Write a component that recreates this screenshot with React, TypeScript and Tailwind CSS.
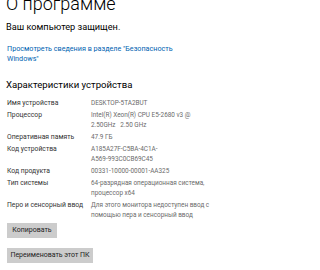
const ROWS: { label: string; value: string[] }[] = [
  { label: 'Имя устройства', value: ['DESKTOP-5TA2BUT'] },
  { label: 'Процессор', value: ['Intel(R) Xeon(R) CPU E5-2680 v3 @', '2.50GHz   2.50 GHz'] },
  { label: 'Оперативная память', value: ['47.9 ГБ'] },
  { label: 'Код устройства', value: ['A185A27F-C5BA-4C1A-', 'A569-993C0CB69C45'] },
  { label: 'Код продукта', value: ['00331-10000-00001-AA325'] },
  { label: 'Тип системы', value: ['64-разрядная операционная система,', 'процессор x64'] },
  {
    label: 'Перо и сенсорный ввод',
    value: ['Для этого монитора недоступен ввод с', 'помощью пера и сенсорный ввод'],
  },
]

export default function App() {
  return (
    <div
      className="w-[320px] h-[270px] overflow-hidden bg-white pl-[6px] text-black"
      style={{ fontFamily: 'Roboto, "Noto Sans", sans-serif' }}
    >
      <h1 className="mt-[-6px] text-[18px] leading-[20px] font-light">О программе</h1>
      <p className="mt-[7px] text-[9.2px] leading-[12px]">Ваш компьютер защищен.</p>
      <a className="mt-[11px] block whitespace-pre pl-[1px] text-[7.2px] leading-[9.5px] text-[#0063b1]">
        {'Просмотреть сведения в разделе "Безопасность\nWindows"'}
      </a>

      <h2 className="mt-[15px] text-[9.6px] leading-[14px]">Характеристики устройства</h2>

      <div className="mt-[6px] grid grid-cols-[84px_1fr] gap-y-[2px] pl-[1px] text-[6.8px] leading-[10px]">
        {ROWS.map(row => (
          <div key={row.label} className="contents">
            <div className="whitespace-nowrap text-[#333]">{row.label}</div>
            <div className="whitespace-pre text-[6.4px] text-[#6b6b6b]">{row.value.join('\n')}</div>
          </div>
        ))}
      </div>

      <div className="mt-[3px] flex flex-col items-start gap-[10px] pl-[1px]">
        <button className="h-[15px] w-[50px] bg-[#cccccc] text-[7px] text-[#222]">Копировать</button>
        <button className="h-[15px] w-[86px] bg-[#cccccc] text-[7px] text-[#222]">
          Переименовать этот ПК
        </button>
      </div>
    </div>
  )
}
